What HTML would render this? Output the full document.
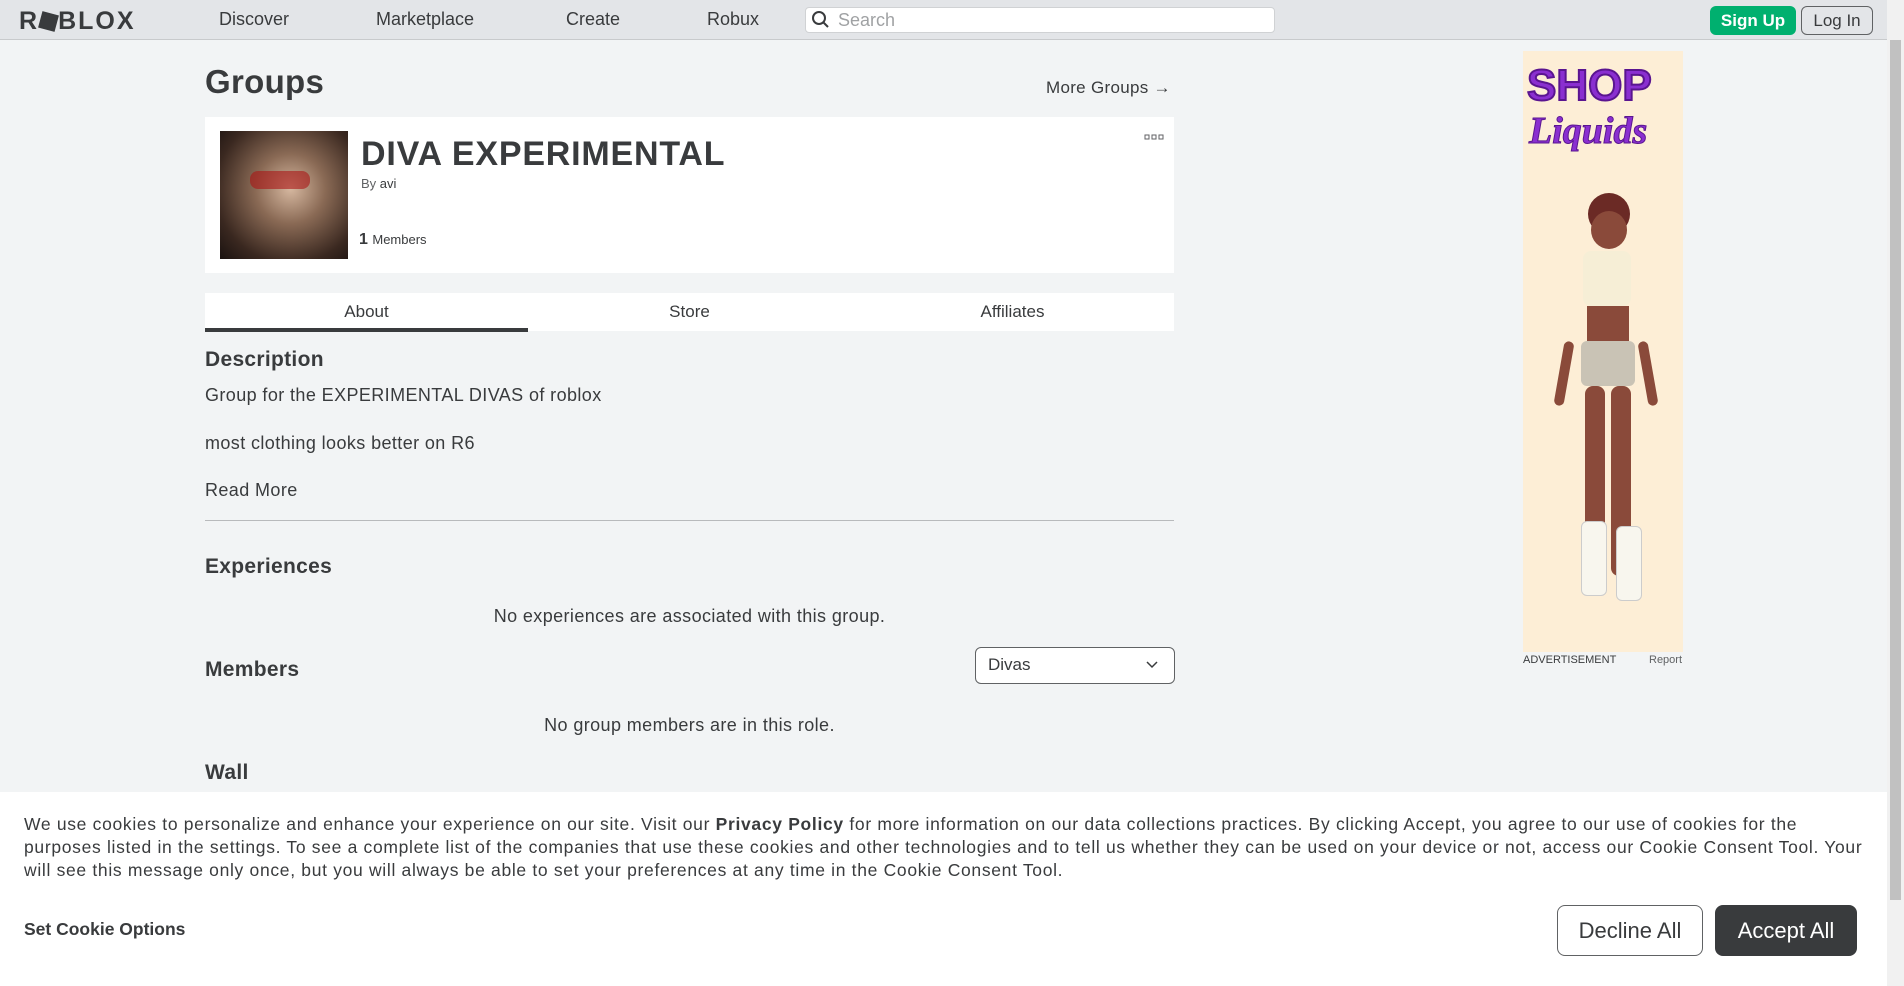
<!DOCTYPE html>
<html><head><meta charset="utf-8">
<style>
*{box-sizing:border-box;margin:0;padding:0}
body{width:1904px;height:986px;overflow:hidden;background:#f2f4f5;font-family:"Liberation Sans",sans-serif;color:#393b3d;position:relative}
.abs{position:absolute}
.hdr{left:0;top:0;width:1887px;height:40px;background:#e3e5e8;border-bottom:1px solid #c8cacc}
.nav{top:9px;font-size:18px;color:#393b3d}
.sb{right:0;top:0;width:17px;height:986px;background:#f1f1f1}
.sb div{position:absolute;left:3px;top:40px;width:11px;height:860px;background:#c1c1c1}
.card{background:#fff}
.t{font-size:17px}
.b{font-size:18px;letter-spacing:0.4px}
</style></head><body>
<div class="abs hdr"></div>
<div class="abs" style="left:19px;top:7px;font-size:25px;font-weight:900;letter-spacing:2px;color:#393b3d">R<span style="display:inline-block;width:17px;height:17px;background:#393b3d;transform:rotate(15deg);vertical-align:-1px;margin:0 1px"></span>BLOX</div>
<div class="abs nav" style="left:219px">Discover</div>
<div class="abs nav" style="left:376px">Marketplace</div>
<div class="abs nav" style="left:566px">Create</div>
<div class="abs nav" style="left:707px">Robux</div>
<div class="abs" style="left:805px;top:7px;width:470px;height:26px;background:#fff;border-radius:4px;border:1px solid #d0d2d4"></div>
<svg class="abs" style="left:811px;top:10px" width="20" height="20" viewBox="0 0 20 20"><circle cx="8" cy="8" r="6" fill="none" stroke="#393b3d" stroke-width="2"/><path d="M12.5 12.5L17 17" stroke="#393b3d" stroke-width="2"/></svg>
<div class="abs" style="left:838px;top:10px;font-size:18px;color:#a0a2a4">Search</div>
<div class="abs" style="left:1710px;top:6px;width:86px;height:29px;background:#00b06f;border-radius:6px;color:#fff;font-weight:bold;font-size:17px;text-align:center;line-height:29px">Sign Up</div>
<div class="abs" style="left:1801px;top:6px;width:72px;height:29px;border:1px solid #606264;border-radius:6px;font-size:17px;text-align:center;line-height:27px">Log In</div>
<div class="abs sb"><div></div></div>

<div class="abs" style="left:205px;top:63px;font-size:33px;font-weight:bold;letter-spacing:0.3px">Groups</div>
<div class="abs" style="left:1046px;top:78px;font-size:17px;letter-spacing:0.3px">More Groups →</div>
<div class="abs card" style="left:205px;top:117px;width:969px;height:156px"></div>
<div class="abs" style="left:220px;top:131px;width:128px;height:128px;background:radial-gradient(ellipse at 55% 45%,#d6b8a0 0%,#8a6a55 35%,#3a2820 75%,#1a1210 100%)"><div style="position:absolute;left:30px;top:40px;width:60px;height:18px;background:rgba(170,20,20,.6);border-radius:8px"></div></div>
<div class="abs" style="left:361px;top:135px;font-size:34px;font-weight:bold;letter-spacing:0.8px">DIVA EXPERIMENTAL</div>
<div class="abs" style="left:361px;top:176px;font-size:13px;color:#606264">By <span style="color:#393b3d">avi</span></div>
<div class="abs" style="left:359px;top:231px;font-size:16px"><b>1</b> <span style="font-size:13px">Members</span></div>
<svg class="abs" style="left:1144px;top:134px" width="20" height="6"><rect x="1" y="1" width="4" height="4" fill="none" stroke="#606264"/><rect x="8" y="1" width="4" height="4" fill="none" stroke="#606264"/><rect x="15" y="1" width="4" height="4" fill="none" stroke="#606264"/></svg>

<div class="abs card" style="left:205px;top:293px;width:969px;height:38px"></div>
<div class="abs" style="left:205px;top:328px;width:323px;height:4px;background:#393b3d"></div>
<div class="abs t" style="left:205px;top:302px;width:323px;text-align:center">About</div>
<div class="abs t" style="left:528px;top:302px;width:323px;text-align:center">Store</div>
<div class="abs t" style="left:851px;top:302px;width:323px;text-align:center">Affiliates</div>

<div class="abs" style="left:205px;top:348px;font-size:21px;font-weight:bold;letter-spacing:0.3px">Description</div>
<div class="abs b" style="left:205px;top:385px">Group for the EXPERIMENTAL DIVAS of roblox</div>
<div class="abs b" style="left:205px;top:433px">most clothing looks better on R6</div>
<div class="abs b" style="left:205px;top:480px">Read More</div>
<div class="abs" style="left:205px;top:520px;width:969px;height:1px;background:#b8babc"></div>
<div class="abs" style="left:205px;top:555px;font-size:21px;font-weight:bold;letter-spacing:0.3px">Experiences</div>
<div class="abs b" style="left:205px;top:606px;width:969px;text-align:center">No experiences are associated with this group.</div>
<div class="abs" style="left:205px;top:658px;font-size:21px;font-weight:bold;letter-spacing:0.3px">Members</div>
<div class="abs" style="left:975px;top:647px;width:200px;height:37px;border:1px solid #606264;border-radius:6px;background:#fff"></div>
<div class="abs t" style="left:988px;top:655px">Divas</div>
<svg class="abs" style="left:1146px;top:660px" width="12" height="10"><path d="M1 2l5 5 5-5" fill="none" stroke="#393b3d" stroke-width="1.5"/></svg>
<div class="abs b" style="left:205px;top:715px;width:969px;text-align:center">No group members are in this role.</div>
<div class="abs" style="left:205px;top:761px;font-size:21px;font-weight:bold;letter-spacing:0.3px">Wall</div>

<div class="abs" style="left:1523px;top:51px;width:160px;height:601px;background:#fdeed6;overflow:hidden">
<div style="position:absolute;left:4px;top:10px;font-size:44px;font-weight:900;color:#8a2fd0;-webkit-text-stroke:2px #5a1590">SHOP</div>
<div style="position:absolute;left:6px;top:58px;font-size:38px;font-weight:bold;font-style:italic;color:#8a2fd0;-webkit-text-stroke:1px #5a1590;font-family:'Liberation Serif',serif">Liquids</div>
<div style="position:absolute;left:65px;top:142px;width:42px;height:42px;border-radius:50%;background:#6b2a25"></div>
<div style="position:absolute;left:68px;top:160px;width:36px;height:38px;border-radius:50%;background:#8a4a3a"></div>
<div style="position:absolute;left:60px;top:200px;width:48px;height:55px;background:#f6eed6;border-radius:8px"></div>
<div style="position:absolute;left:64px;top:255px;width:42px;height:40px;background:#8a4a3a"></div>
<div style="position:absolute;left:58px;top:290px;width:54px;height:45px;background:#c9c3b5;border-radius:6px"></div>
<div style="position:absolute;left:62px;top:335px;width:20px;height:190px;background:#8a4a3a;border-radius:8px"></div>
<div style="position:absolute;left:88px;top:335px;width:20px;height:190px;background:#8a4a3a;border-radius:8px"></div>
<div style="position:absolute;left:36px;top:290px;width:10px;height:65px;background:#8a4a3a;border-radius:5px;transform:rotate(10deg)"></div>
<div style="position:absolute;left:120px;top:290px;width:10px;height:65px;background:#8a4a3a;border-radius:5px;transform:rotate(-10deg)"></div>
<div style="position:absolute;left:58px;top:470px;width:26px;height:75px;background:#f8f6ee;border-radius:6px;border:1px solid #ccc"></div>
<div style="position:absolute;left:93px;top:475px;width:26px;height:75px;background:#f8f6ee;border-radius:6px;border:1px solid #ccc"></div>
</div>
<div class="abs" style="left:1523px;top:654px;font-size:11px;color:#393b3d">ADVERTISEMENT</div>
<div class="abs" style="left:1649px;top:654px;font-size:11px;color:#606264">Report</div>

<div class="abs" style="left:0;top:792px;width:1887px;height:194px;background:#fff"></div>
<div class="abs" style="left:24px;top:813px;font-size:17.5px;line-height:23px;color:#393b3d;white-space:nowrap;letter-spacing:0.68px">
<div>We use cookies to personalize and enhance your experience on our site. Visit our <b>Privacy Policy</b> for more information on our data collections practices. By clicking Accept, you agree to our use of cookies for the</div>
<div>purposes listed in the settings. To see a complete list of the companies that use these cookies and other technologies and to tell us whether they can be used on your device or not, access our Cookie Consent Tool. Your</div>
<div>will see this message only once, but you will always be able to set your preferences at any time in the Cookie Consent Tool.</div>
</div>
<div class="abs" style="left:24px;top:919px;font-size:17.5px;font-weight:bold">Set Cookie Options</div>
<div class="abs" style="left:1557px;top:905px;width:146px;height:51px;border:1px solid #606264;border-radius:8px;font-size:22px;text-align:center;line-height:49px;color:#393b3d">Decline All</div>
<div class="abs" style="left:1715px;top:905px;width:142px;height:51px;background:#393b3d;border-radius:8px;font-size:22px;text-align:center;line-height:51px;color:#fff">Accept All</div>
</body></html>
